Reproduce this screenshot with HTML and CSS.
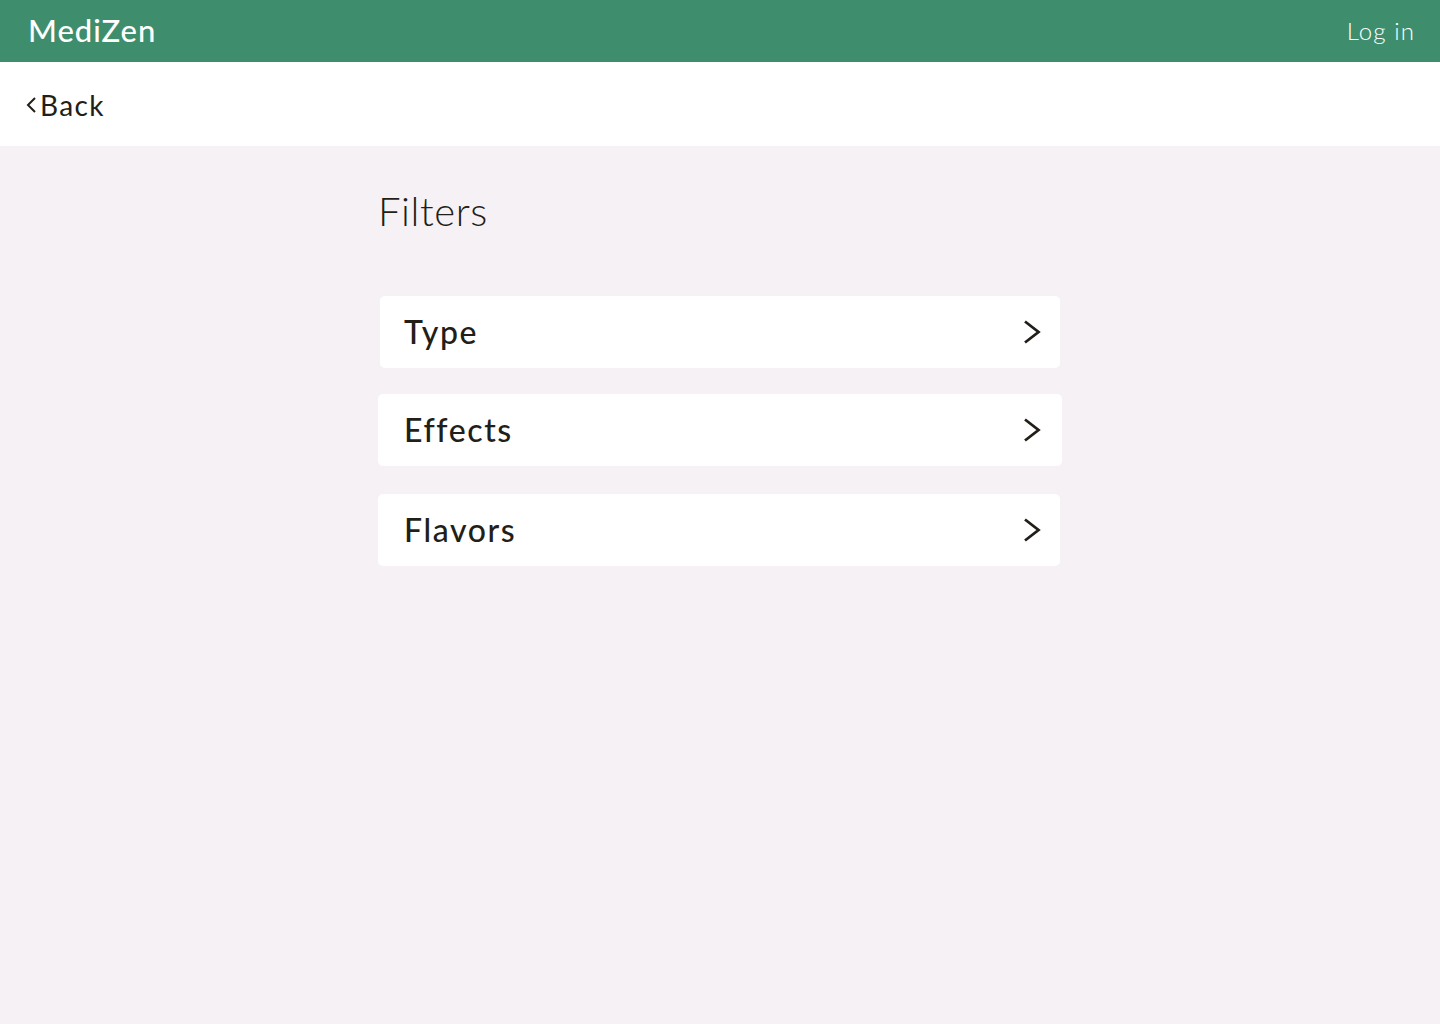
FILE: index.html
```html
<!DOCTYPE html>
<html lang="en">
<head>
<meta charset="utf-8">
<title>MediZen - Filters</title>
<link rel="stylesheet" href="styles.css">
</head>
<body>
<header class="topbar">
  <div class="brand">MediZen</div>
  <a class="login" href="#">Log in</a>
</header>
<nav class="backbar">
  <a class="back" href="#"><svg class="back-icon" width="12" height="20" viewBox="0 0 12 20"><path d="M10 3 L3 10 L10 17" fill="none" stroke="#221e18" stroke-width="2"/></svg>Back</a>
</nav>
<main class="content">
  <h1 class="title">Filters</h1>
  <ul class="filters">
    <li class="filter filter-type"><span>Type</span><svg class="chev" width="22" height="26" viewBox="0 0 22 26"><path d="M4 2.5 L17.5 13 L4 23.5" fill="none" stroke="#221e18" stroke-width="2.8"/></svg></li>
    <li class="filter filter-effects"><span>Effects</span><svg class="chev" width="22" height="26" viewBox="0 0 22 26"><path d="M4 2.5 L17.5 13 L4 23.5" fill="none" stroke="#221e18" stroke-width="2.8"/></svg></li>
    <li class="filter filter-flavors"><span>Flavors</span><svg class="chev" width="22" height="26" viewBox="0 0 22 26"><path d="M4 2.5 L17.5 13 L4 23.5" fill="none" stroke="#221e18" stroke-width="2.8"/></svg></li>
  </ul>
</main>
</body>
</html>
```
FILE: styles.css
```css
* { box-sizing: border-box; }
html, body { margin: 0; padding: 0; }
body {
  background: #f6f1f5;
  font-family: "Lato", "Open Sans", sans-serif;
  color: #221e18;
  min-height: 1024px;
}
a { text-decoration: none; color: inherit; }

.topbar {
  height: 62px;
  background: #3e8e6e;
  display: flex;
  align-items: center;
  justify-content: space-between;
  padding: 0 25px 0 28px;
}
.brand {
  color: #fff;
  font-size: 31px;
  font-weight: 500;
  letter-spacing: 1px;
  padding-bottom: 2px;
}
.login {
  color: #fff;
  font-size: 24px;
  font-weight: 300;
  letter-spacing: 1.1px;
  padding-bottom: 2px;
}

.backbar {
  height: 84px;
  background: #fff;
  display: flex;
  align-items: center;
  padding: 0 0 0 25px;
}
.back {
  display: flex;
  align-items: center;
  font-size: 28px;
  font-weight: 400;
  letter-spacing: 1.4px;
  color: #221e18;
  padding-top: 1px;
}
.back-icon { margin-right: 3px; margin-top: 1px; }

.content {
  width: 684px;
  margin: 0 auto 0 378px;
  padding-top: 41px;
}
.title {
  margin: 0 0 61px 0;
  font-size: 40px;
  font-weight: 300;
  letter-spacing: 0.6px;
  line-height: 48px;
  color: #221e18;
}
.filters {
  list-style: none;
  margin: 0;
  padding: 0;
  display: flex;
  flex-direction: column;
}
.filter {
  height: 72px;
  background: #fff;
  border-radius: 5px;
  display: flex;
  align-items: center;
  justify-content: space-between;
  padding: 0 18px 0 26px;
  font-size: 32px;
  font-weight: 500;
  letter-spacing: 1.6px;
}
.filter span { padding-bottom: 1px; }
.filter-type { width: 680px; margin-left: 2px; padding-left: 24px; padding-right: 17px; }
.filter-effects { width: 684px; margin-top: 26px; padding-right: 19px; }
.filter-flavors { width: 682px; margin-top: 28px; padding-right: 17px; }
```
